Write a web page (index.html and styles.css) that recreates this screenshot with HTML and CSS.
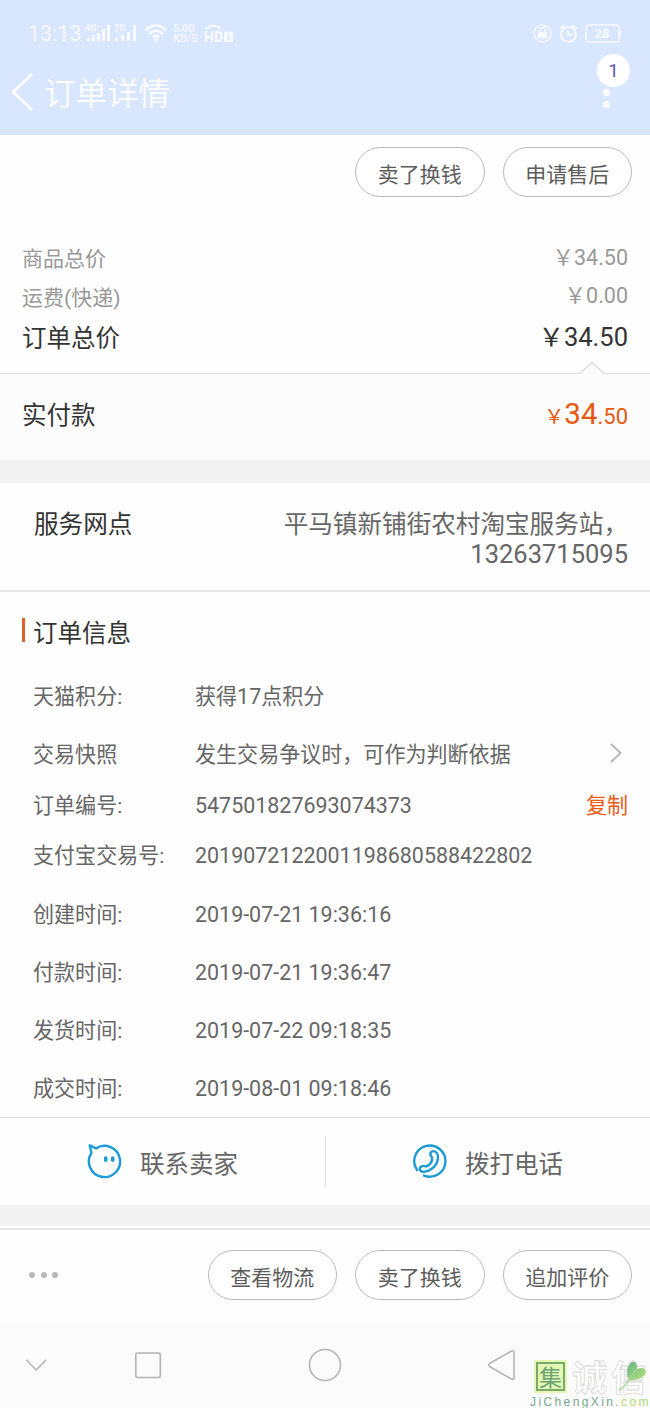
FILE: index.html
```html
<!DOCTYPE html>
<html lang="zh-CN">
<head>
<meta charset="utf-8">
<title>订单详情</title>
<link rel="stylesheet" href="styles.css">
</head>
<body>
<header class="header">
  <div class="status">
    <span class="clock">13:13</span>
    <svg class="signals" width="54" height="22" viewBox="0 0 54 22">
      <g fill="#fff">
        <text x="0" y="8" class="net">4G⁺</text><text x="29" y="8" class="net">2G</text>
        <path d="M2 15h3v3H2zM7 12h3v6H7zM12 10h3v8h-3zM17 6h3v12h-3zM22 2h3v16h-3zM30 15h3v3h-3zM36 12h3v6h-3zM42 9h3v9h-3zM48 2h3v16h-3z"/>
      </g>
    </svg>
    <svg class="wifi" width="24" height="20" viewBox="0 0 24 20" fill="none" stroke="#fff" stroke-width="2.600">
      <path d="M1.500 6.500q10.500-10 21 0M5 10q7-6.500 14 0M8.500 13.500q3.500-3.500 7 0"/><circle cx="12" cy="16" r=".7"/>
    </svg>
    <span class="speed"><span>5.00</span><span>KB/S</span></span>
    <svg class="hd" width="30" height="22" viewBox="0 0 30 22">
      <path d="M1 6.500C3 0 16 0 18 6.500l-4-.5-1-2H6L5 6z" fill="#fff"/>
      <text x="0" y="19" class="hdtext">HD</text>
      <rect x="20" y="8.500" width="9" height="10.500" rx="1" fill="#fff"/><path d="M24.500 11v6" stroke="#d8e6fd" stroke-width="1.500"/>
    </svg>
    <span class="status-right">
      <svg width="19" height="20" viewBox="0 0 19 20" fill="none" stroke="#fff" stroke-width="1.500">
        <circle cx="9.500" cy="9.500" r="8.500"/><path d="M6.700 8.500v-2a2.800 2.800 0 0 1 5.600 0v2"/><path fill="#fff" d="M5.500 8.500h8v5h-8z"/>
      </svg>
      <svg width="19" height="20" viewBox="0 0 19 20" fill="none" stroke="#fff" stroke-width="2">
        <circle cx="9.500" cy="10.500" r="7.500"/><path d="M9 6.500V11h4M1.500 4.500l4-3.500M17.500 4.500l-4-3.500"/>
      </svg>
      <svg width="37" height="20" viewBox="0 0 37 20">
        <rect x="1" y="1" width="33" height="17" rx="3" fill="none" stroke="#fff" stroke-width="1.500"/><path d="M34 7h2v5h-2" fill="#fff"/>
        <text x="17" y="14.300" text-anchor="middle" class="battery">28</text>
      </svg>
    </span>
  </div>
  <div class="titlebar">
    <svg width="24" height="40" viewBox="0 0 24 40" fill="none" stroke="#fff" stroke-width="2.600"><path d="M21 2L2 20l19 18"/></svg>
    <h1 class="title">订单详情</h1>
    <div class="more"><i></i><i></i><i></i><span class="badge">1</span></div>
  </div>
</header>

<main>
  <div class="actions top"><button class="pill">卖了换钱</button><button class="pill">申请售后</button></div>

  <section class="totals">
    <div class="line muted"><span>商品总价</span><span class="num">￥34.50</span></div>
    <div class="line muted"><span>运费(快递)</span><span class="num">￥0.00</span></div>
    <div class="line total"><span>订单总价</span><span class="num">￥34.50</span></div>
  </section>
  <section class="paid">
    <svg class="notch" width="26" height="14" viewBox="0 0 26 14"><path d="M0 14L13 1.500 26 14z" fill="#fcfcfc"/><path d="M.5 12.800L13 1.500l12.500 11.300" fill="none" stroke="#ddd" stroke-width="1.500"/></svg>
    <span>实付款</span>
    <span class="price"><small class="yen">￥</small><b>34</b><small>.50</small></span>
  </section>
  <div class="gap"></div>

  <section class="station">
    <span class="station-label">服务网点</span>
    <p class="station-value">平马镇新铺街农村淘宝服务站，<br><span class="tel">13263715095</span></p>
  </section>

  <section class="info">
    <h2 class="info-title">订单信息</h2>
    <dl class="rows">
      <div class="row"><dt>天猫积分:</dt><dd>获得<span class="digits">17</span>点积分</dd></div>
      <div class="row snapshot"><dt>交易快照</dt><dd>发生交易争议时，可作为判断依据</dd>
        <svg class="chevron" width="14" height="22" viewBox="0 0 14 22" fill="none" stroke="#bbb" stroke-width="2.200"><path d="M2 2l9.500 9L2 20"/></svg></div>
      <div class="row short"><dt>订单编号:</dt><dd class="digits">547501827693074373</dd><a class="copy">复制</a></div>
      <div class="row"><dt>支付宝交易号:</dt><dd class="digits">2019072122001198680588422802</dd></div>
      <div class="row"><dt>创建时间:</dt><dd class="digits">2019-07-21 19:36:16</dd></div>
      <div class="row"><dt>付款时间:</dt><dd class="digits">2019-07-21 19:36:47</dd></div>
      <div class="row"><dt>发货时间:</dt><dd class="digits">2019-07-22 09:18:35</dd></div>
      <div class="row"><dt>成交时间:</dt><dd class="digits">2019-08-01 09:18:46</dd></div>
    </dl>
  </section>

  <section class="contact">
    <div class="contact-item">
      <svg width="36" height="36" viewBox="0 0 36 36" fill="none" stroke="#1d9bd7" stroke-width="2.400" stroke-linecap="round" stroke-linejoin="round">
        <path d="M4.400 10L2.700 2.300 9 5.400A15.600 15.600 0 1 1 4.400 10"/><path d="M18.700 15v2.200M25.700 15v2.200" stroke-width="3.600"/>
      </svg>
      <span>联系卖家</span>
    </div>
    <div class="contact-item">
      <svg width="36" height="36" viewBox="0 0 36 36" fill="none" stroke="#1d9bd7" stroke-width="2.400" stroke-linecap="round" stroke-linejoin="round">
        <path d="M5 27A15.600 15.600 0 1 1 12 32.600"/>
        <path d="M19.500 13.500C16.500 10 20 7.300 23 8.500C28 11 26.500 21 20 25.500C16 28.500 9.500 30.500 8 27C7 23.500 11 22 14 23.500C18 22.500 21.500 17.500 19.500 13.500z"/>
      </svg>
      <span>拨打电话</span>
    </div>
  </section>
  <div class="gap bottom-gap"></div>
</main>

<footer>
  <div class="actions bottom">
    <span class="dots"><i></i><i></i><i></i></span>
    <button class="pill">查看物流</button><button class="pill">卖了换钱</button><button class="pill">追加评价</button>
  </div>
  <nav class="nav">
    <svg width="650" height="86" viewBox="0 0 650 86" fill="none" stroke="#b4b4b4" stroke-width="1.600" stroke-linejoin="round">
      <path d="M26.500 38l9.700 10 9.700-10"/><rect x="135.800" y="31" width="24.500" height="24.500" rx="1.500"/>
      <circle cx="325" cy="43" r="15.500"/><path d="M489.500 41.500q-1.500 1.500 0 3l22 12.500q2.500 1 2.500-1.500v-25q0-2.500-2.500-1.500z"/>
    </svg>
    <div class="watermark">
      <div class="mark-top">
        <span class="seal"><span>集</span></span><span class="outline">诚信</span>
        <svg class="leaf" width="30" height="32" viewBox="0 0 30 32">
          <defs><linearGradient id="leaf" x1="0" y1="0" x2="1" y2="1"><stop offset="0" stop-color="#6cb38a"/><stop offset="1" stop-color="#b6e47c"/></linearGradient></defs>
          <path d="M11 20C6 9 12 0 17 2q3 3 2 7q8-3 9 3q-2 8-17 8z" fill="url(#leaf)"/><path d="M18 9L11 20Q7 27 1 30" fill="none" stroke="#a0d588" stroke-width="1.500"/>
        </svg>
      </div>
      <div class="domain">JiChengXin.<span>com</span></div>
    </div>
  </nav>
</footer>
</body>
</html>
```

FILE: styles.css
```css
* { box-sizing: border-box; }
body {
  margin: 0;
  width: 650px;
  background: #fefefe;
  color: #666;
  font-family: Roboto, "Noto Sans CJK SC", sans-serif;
  font-size: 21px;
}
h1, h2, p, dl, dd { margin: 0; font-weight: 400; }
svg { display: block; flex: none; }

.header { height: 135px; background: #d8e6fe; color: #fff; }
.status { display: flex; align-items: center; height: 54px; padding: 14px 28px 0; opacity: .8; }
.clock { width: 57px; font-size: 21.500px; line-height: 24px; }
.net { font: 700 9px Roboto, sans-serif; }
.wifi { margin-left: 5px; }
.speed { display: flex; flex-direction: column; width: 26px; margin-left: 5px; font-size: 11px; font-weight: 500; line-height: 10px; }
.hd { margin-left: 5px; }
.hdtext { font: 700 14px Roboto, sans-serif; fill: #fff; }
.battery { font: 700 13px Roboto, sans-serif; fill: #fff; }
.status-right { display: flex; gap: 7px; margin-left: auto; }
.titlebar { display: flex; align-items: center; height: 76px; padding: 0 18px 0 11px; }
.title { margin-left: 9px; padding-top: 6px; font-size: 31.500px; line-height: 44px; font-weight: 350; }
.more { position: relative; display: flex; flex-direction: column; gap: 5px; width: 7px; margin: 0 22px 0 auto; }
.more i { width: 7px; height: 7px; border-radius: 50%; background: #fff; }
.badge {
  position: absolute; left: -6px; top: -23px; width: 33px; height: 33px;
  border-radius: 50%; background: #fff; color: #5550b0;
  font-size: 18px; line-height: 34px; text-align: center;
}

.actions { display: flex; align-items: center; justify-content: flex-end; gap: 18px; padding: 0 18px; }
.top { height: 73px; }
.pill {
  width: 129.500px; height: 50px; padding: 2px 0 0;
  border: 1px solid #bbb; border-radius: 25px; background: #fff;
  color: #5c5c5c; font: 21px Roboto, "Noto Sans CJK SC", sans-serif;
}

.totals { height: 165px; padding: 30px 22px 0; }
.line { display: flex; align-items: center; justify-content: space-between; height: 38.500px; }
.muted { color: #999; }
.num { font-size: 21.500px; padding-bottom: 4px; }
.total { height: 43px; color: #333; font-size: 24.500px; }
.total .num { font-size: 25.500px; padding-bottom: 5px; }
.paid {
  position: relative; display: flex; align-items: center; justify-content: space-between;
  height: 87px; padding: 0 22px 7px; border-top: 1px solid #ddd; background: #fcfcfc; color: #333; font-size: 24.500px;
}
.notch { position: absolute; right: 45px; top: -13px; }
.price { color: #e8580f; white-space: nowrap; }
.price b { font-size: 29.500px; font-weight: 400; }
.price small { font-size: 22px; }
.price .yen { font-size: 20px; }
.gap { height: 23px; background: #f2f2f2; }

.station { display: flex; justify-content: space-between; height: 109px; padding: 27px 22px 0 34px; border-bottom: 2px solid #e5e5e5; font-size: 24.600px; line-height: 29.500px; }
.station-label { color: #333; }
.station-value { text-align: right; }
.tel { font-size: 25.500px; }

.info { height: 525px; padding: 27px 22px 0 33px; }
.info-title { position: relative; color: #333; font-size: 24.500px; line-height: 30px; }
.info-title::before { content: ""; position: absolute; left: -11px; top: -1px; width: 3px; height: 24px; background: #e2612a; }
.rows { padding-top: 17px; }
.row { display: flex; align-items: center; height: 58.300px; font-size: 21.050px; }
.row dt { width: 162px; white-space: nowrap; }
.short { height: 42.500px; }
.digits { font-size: 21.450px; }
.row > .digits { padding-top: 3px; }
.chevron { margin: 0 5px 1px auto; }
.copy { margin-left: auto; color: #ee5a14; }

.contact { display: flex; align-items: center; height: 88px; border-top: 1px solid #ddd; font-size: 24.500px; }
.contact-item { display: flex; align-items: center; gap: 17px; width: 325px; height: 51px; padding-left: 87px; }
.contact-item svg { margin-bottom: 2px; }
.contact-item span { padding-top: 1px; }
.contact-item + .contact-item { padding-left: 86px; border-left: 1px solid #ddd; }
.bottom-gap { height: 21px; }

.bottom { height: 94px; margin-top: 2px; border-top: 2px solid #e8e8e8; padding-bottom: 3px; }
.dots { display: flex; gap: 5.500px; margin: 0 auto 0 11px; }
.dots i { width: 6px; height: 6px; border-radius: 50%; background: #b8b8b8; }
.nav { position: relative; height: 86px; background: #fbfbfb; overflow: hidden; }
.watermark { position: absolute; left: 530px; top: 38px; width: 120px; }
.mark-top { position: relative; display: flex; height: 36px; }
.seal { width: 34px; height: 33px; margin-left: 4px; padding: 2px; background: #e4f8b4; }
.seal span { display: block; width: 29px; height: 29px; border: 2px solid #79a96d; color: #6ba573; font: 400 23px/24px "Noto Sans CJK SC", sans-serif; text-align: center; }
.outline { margin-left: 5px; color: #fff; -webkit-text-stroke: .8px #d8d8d8; font: 700 35px/31px "Noto Sans CJK SC", sans-serif; letter-spacing: 4px; white-space: nowrap; }
.leaf { position: absolute; left: 88px; top: 0; }
.domain { color: #75a98c; font: 12px/13px "Liberation Sans", sans-serif; letter-spacing: 2.400px; white-space: nowrap; }
.domain span { color: #b0d873; }
```
